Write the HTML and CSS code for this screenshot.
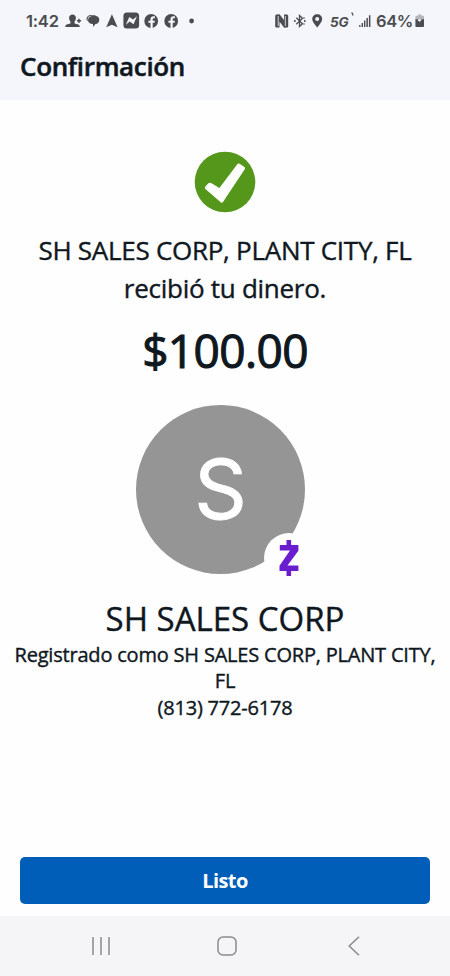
FILE: index.html
```html
<!DOCTYPE html>
<html lang="es">
<head>
    <meta charset="UTF-8">
    <meta name="viewport" content="width=device-width, initial-scale=1.0">
    <title>Confirmación</title>
    <link rel="stylesheet" href="styles.css">
</head>
<body>
    <header class="top">
        <div class="status-bar">
            <div class="status-left">
                <span class="time">1:42</span>
                <!-- contact added -->
                <svg width="17" height="16" viewBox="0 0 17 16"><path d="M7.500 1.500c2 0 3.400 1.300 3.400 3.400 0 1.500-.6 2.600-1.300 3.300v2.200l3.600 1c1 .3 1.500 1 1.500 2.600H.3c0-1.600.5-2.300 1.500-2.600l3.600-1V8.200c-.7-.7-1.300-1.800-1.300-3.300 0-2.100 1.400-3.400 3.400-3.400z"/><path d="M13.300 5.700h1.400v1.400h1.400v1.400h-1.400v1.400h-1.400V8.500h-1.400V7.100h1.400z"/></svg>
                <!-- messages -->
                <svg width="16" height="16" viewBox="0 0 16 16"><path d="M.5 6.500C.5 3.500 2.300 2 5 2h4.500v.7H6C3 2.700 1.600 4 1.600 6.800v1.400C.9 7.800.5 7.200.5 6.500z"/><path d="M6.500 3h3c2.300 0 3.800 1.700 3.800 3.900S11.800 10.700 9.500 11L7 14v-3C4 11 2 9.500 2 7.200S4 3 6.500 3z"/></svg>
                <!-- navigation -->
                <svg width="13" height="16" viewBox="0 0 13 16"><path d="M5.900 1.300 11.600 14.300l-5.700-2.600L.2 14.300z"/></svg>
                <!-- messenger -->
                <svg width="17" height="17" viewBox="0 0 17 17"><rect x=".4" y=".5" width="15.700" height="16" rx="3.500"/><path class="cut" d="m2.800 12.800 3.500-7.800 3.700 2.600 4-3.300-3.500 8-3.700-2.800z"/></svg>
                <!-- facebook x2 -->
                <svg width="16" height="16" viewBox="0 0 16 16"><circle cx="7.200" cy="8" r="6.900"/><path class="cut" d="M6.500 15V9.800H4.400V7.700h2.100V6.200c0-2 1.100-3 2.900-3h1.500v2H9.700c-.8 0-1 .4-1 1.100v1.400h2.200l-.4 2.100H8.700V15z"/></svg>
                <svg width="16" height="16" viewBox="0 0 16 16"><circle cx="7.200" cy="8" r="6.900"/><path class="cut" d="M6.500 15V9.800H4.400V7.700h2.100V6.200c0-2 1.100-3 2.900-3h1.500v2H9.700c-.8 0-1 .4-1 1.100v1.400h2.200l-.4 2.100H8.700V15z"/></svg>
                <svg width="12" height="16" viewBox="0 0 12 16"><circle cx="7.600" cy="8" r="2.400"/></svg>
            </div>
            <div class="status-right">
                <!-- nfc -->
                <svg width="14" height="16" viewBox="0 0 14 16"><path d="M2 1.500 4.500 1.200 9 7V1.500h2.500c1 0 1.700.6 1.700 1.600v9.800c0 1-.5 1.500-1.500 1.600L9.200 14.800 4.500 8.700v5.800H2c-1.200 0-1.800-.6-1.800-1.600V3.100c0-1 .6-1.600 1.800-1.600z"/><path class="cut-line" d="M3.200 3v10M10.300 3v10"/></svg>
                <!-- bluetooth -->
                <svg width="14" height="16" viewBox="0 0 14 16"><path class="line" d="m3.300 4.800 6.200 6-3 2.700v-11l3 2.700-6.200 6"/><circle cx="1.900" cy="8" r="1"/><circle cx="11.800" cy="8" r="1"/><circle cx="11" cy="5" r=".8"/><circle cx="11" cy="11" r=".8"/></svg>
                <!-- location -->
                <svg width="12" height="16" viewBox="0 0 12 16"><path fill-rule="evenodd" d="M6.200 1.200c2.900 0 5 2.100 5 4.900 0 2.600-2.500 5.600-5 8.300-2.500-2.700-5-5.700-5-8.300 0-2.800 2.100-4.900 5-4.900zm0 2.900a2 2 0 1 0 0 4 2 2 0 0 0 0-4z"/></svg>
                <div class="network">
                    <span>5G</span>
                    <svg width="4" height="5" viewBox="0 0 4 5"><path class="tick" d="m.8.600 1.300 3"/></svg>
                </div>
                <!-- signal -->
                <svg width="13" height="16" viewBox="0 0 13 16"><path d="M.2 12h1.300v2H.2zM2.600 10h1.400v4H2.600zM5 7.500h1.400V14H5zM7.400 5h1.500v9H7.400zM9.900 2.200h1.500V14H9.900z"/></svg>
                <span class="percent">64%</span>
                <!-- battery -->
                <svg width="10" height="16" viewBox="0 0 10 16"><path class="pale" d="M3 1.500h3.500v1.300h1.300c.8 0 1.200.4 1.200 1.200v3H.4V4c0-.8.4-1.200 1.200-1.200H3z"/><path d="M.4 6.300H9v6.500c0 .8-.4 1.200-1.200 1.200H1.600c-.8 0-1.200-.4-1.200-1.200z"/><path class="cut" d="M2.800 6.300h4L4.400 9.500V8H3z"/></svg>
            </div>
        </div>
        <h1>Confirmación</h1>
    </header>

    <main class="content">
        <svg class="check" width="62" height="62" viewBox="0 0 62 62">
            <circle cx="31" cy="31" r="30.300"/>
            <path d="m11.200 35.800 3.200-3.500q1.300-1.200 2.700-.2l8.300 4.800L43.300 13.200q1-1.300 2.300-.4l4.800 3.300q1.200.9.3 2.200L29 51q-1 1.300-2.300.2L11.400 38q-1.200-1-.2-2.200z"/>
        </svg>

        <p class="message">SH SALES CORP, PLANT CITY, FL<br>recibió tu dinero.</p>
        <p class="amount">$100.00</p>

        <div class="avatar">
            <span class="initial">S</span>
            <div class="zelle">
                <svg width="20" height="36" viewBox="0 0 20 36"><path d="M7.500 0h4.600v5H19.400v5.800L8.500 25.500h10.900v5.500h-7.300v5H7.500v-5H.5v-5.300L11 10.500H.8V5h6.700z"/></svg>
            </div>
        </div>

        <h2>SH SALES CORP</h2>
        <p class="registered">Registrado como SH SALES CORP, PLANT CITY, FL</p>
        <p class="phone">(813) 772-6178</p>
    </main>

    <div class="actions">
        <button>Listo</button>
    </div>

    <nav class="nav-bar">
        <svg width="20" height="20" viewBox="0 0 20 20"><path d="M2 1v18M10 1v18M18 1v18"/></svg>
        <svg class="home" width="20" height="20" viewBox="0 0 20 20"><rect x="1" y="1" width="18" height="18" rx="5"/></svg>
        <svg width="12" height="20" viewBox="0 0 12 20"><path d="M11 .8 1.200 10 11 19.200"/></svg>
    </nav>
</body>
</html>
```
FILE: styles.css
```css
* {
    margin: 0;
    padding: 0;
    box-sizing: border-box;
}

body {
    height: 976px;
    display: flex;
    flex-direction: column;
    background: #fefefe;
    color: #10181f;
    font-family: 'Open Sans', 'Noto Sans', sans-serif;
    overflow: hidden;
}

svg {
    display: block;
    flex-shrink: 0;
}

/* Header */
.top {
    height: 100px;
    background: #f4f6fb;
}

.status-bar {
    height: 41px;
    padding: 0 25px 0 26px;
    display: flex;
    justify-content: space-between;
    align-items: center;
    font-family: Inter, Roboto, sans-serif;
    font-weight: 600;
    color: #4b4c50;
}

.status-left,
.status-right {
    display: flex;
    align-items: center;
    gap: 4px;
}

.status-bar svg {
    fill: #4b4c50;
}

.status-bar .cut {
    fill: #f4f6fb;
}

.status-bar .cut-line {
    fill: none;
    stroke: #f4f6fb;
    stroke-width: 0.8;
}

.status-bar .line,
.status-bar .tick {
    fill: none;
    stroke: #4b4c50;
    stroke-width: 1.3;
}

.status-bar .pale {
    fill: #b4b5b9;
}

.time {
    width: 35px;
    font-size: 16.5px;
    letter-spacing: -0.2px;
    white-space: nowrap;
}

.percent {
    width: 35px;
    font-size: 16.5px;
    letter-spacing: -0.4px;
    white-space: nowrap;
}

.network {
    width: 28px;
    display: flex;
    padding: 2px 0 0 3px;
    font-size: 13.5px;
    font-style: italic;
    font-weight: 700;
}

.network svg {
    margin: -2px 0 0 2px;
}

h1 {
    padding-left: 20px;
    font-size: 26px;
    line-height: 50px;
    font-weight: 600;
    letter-spacing: -0.35px;
    -webkit-text-stroke: 0.5px;
}

/* Payment details */
.content {
    flex: 1;
    display: flex;
    flex-direction: column;
    align-items: center;
    padding: 51px 12px 0;
    text-align: center;
    -webkit-text-stroke: 0.4px;
}

.check circle {
    fill: #55971b;
}

.check path {
    fill: #fff;
}

.message {
    margin-top: 18px;
    font-size: 26px;
    line-height: 38px;
    letter-spacing: -0.27px;
    white-space: nowrap;
}

.amount {
    margin-top: 11px;
    font-size: 46px;
    line-height: 64px;
    letter-spacing: -0.6px;
    -webkit-text-stroke: 1.1px;
}

.avatar {
    position: relative;
    width: 169px;
    height: 169px;
    margin: 23px 9px 0 0;
    border-radius: 50%;
    background: #959595;
    display: flex;
    justify-content: center;
    align-items: center;
}

.initial {
    color: #fff;
    font-family: Inter, 'Liberation Sans', sans-serif;
    font-size: 82px;
    line-height: 1;
    -webkit-text-stroke: 0.8px;
}

.zelle {
    position: absolute;
    right: -9px;
    bottom: -9px;
    width: 50px;
    height: 50px;
    border-radius: 50%;
    background: #fefefe;
    display: flex;
    justify-content: center;
    align-items: center;
}

.zelle svg {
    fill: #6a1dce;
}

h2 {
    margin-top: 22px;
    font-size: 33px;
    line-height: 46px;
    font-weight: 400;
}

.registered,
.phone {
    font-size: 20px;
    line-height: 26px;
    letter-spacing: -0.2px;
}

.phone {
    margin-top: 1px;
}

/* Bottom */
.actions {
    padding: 0 20px 12px;
}

button {
    display: block;
    width: 100%;
    height: 47px;
    border: none;
    border-radius: 5px;
    background: #005eb8;
    color: #fff;
    font-family: inherit;
    font-size: 20px;
    font-weight: 700;
    letter-spacing: -0.6px;
}

.nav-bar {
    height: 60px;
    padding: 0 90px 0 91px;
    display: flex;
    justify-content: space-between;
    align-items: center;
    background: #f5f5f8;
}

.nav-bar svg {
    fill: none;
    stroke: #8b8b8d;
    stroke-width: 1.5;
}

.nav-bar .home {
    margin-right: 5px;
}
```
